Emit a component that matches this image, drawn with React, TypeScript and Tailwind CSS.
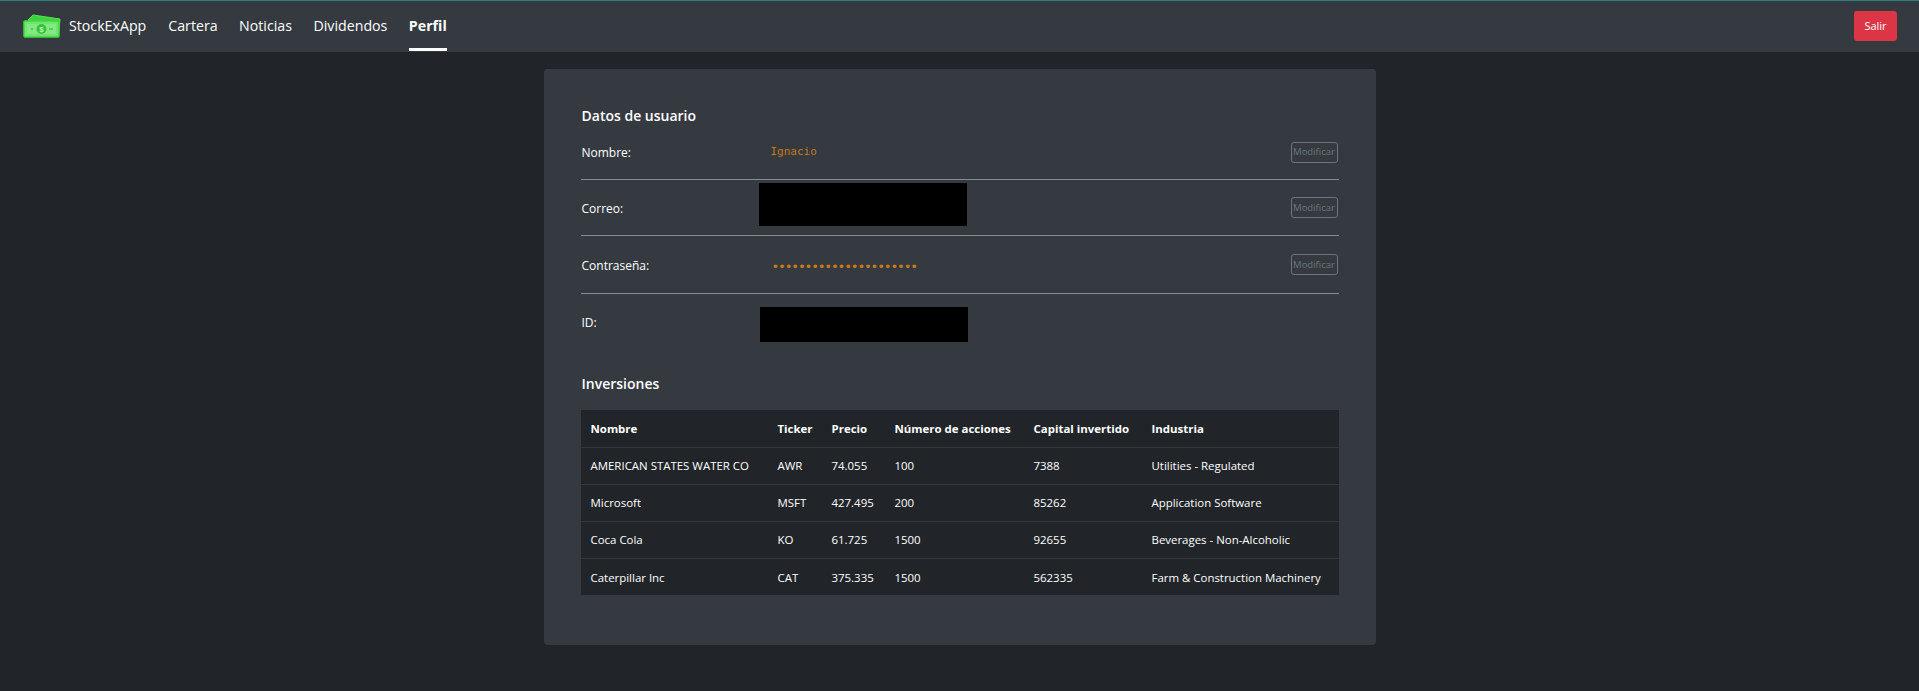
const FONT = "font-['Open_Sans','Noto_Sans',sans-serif]";

const NAV_LINKS = ['Cartera', 'Noticias', 'Dividendos'];

const INVESTMENTS = [
  ['AMERICAN STATES WATER CO', 'AWR', '74.055', '100', '7388', 'Utilities - Regulated'],
  ['Microsoft', 'MSFT', '427.495', '200', '85262', 'Application Software'],
  ['Coca Cola', 'KO', '61.725', '1500', '92655', 'Beverages - Non-Alcoholic'],
  ['Caterpillar Inc', 'CAT', '375.335', '1500', '562335', 'Farm & Construction Machinery'],
];

const HEADERS = ['Nombre', 'Ticker', 'Precio', 'Número de acciones', 'Capital invertido', 'Industria'];
const COLS = ['w-[187px]', 'w-[54px]', 'w-[63px]', 'w-[139px]', 'w-[118px]', 'w-[197px]'];

function MoneyLogo() {
  return (
    <svg width="38" height="24" viewBox="0 0 38 24" className="shrink-0">
      <path d="M5 6 L10 1 L37 5 L36 18 L30 17 Z" fill="#3ed33e" stroke="#55e655" strokeWidth="1" />
      <rect x="1" y="7" width="35" height="16" rx="1" fill="#6fe56f" stroke="#3fd93f" strokeWidth="1.5" />
      <rect x="4" y="10" width="29" height="10" fill="#85e885" />
      <circle cx="18.5" cy="15" r="5" fill="#35c435" />
      <text x="18.5" y="18" textAnchor="middle" fontSize="8" fontWeight="700" fill="#bdf5bd" fontFamily="Liberation Sans">$</text>
      <circle cx="9" cy="15" r="1.3" fill="#4cd64c" />
      <rect x="26" y="14" width="4" height="2" fill="#4cd64c" />
    </svg>
  );
}

function ModifyButton() {
  return (
    <button
      type="button"
      className="mr-px h-[21px] w-[47px] rounded-[3px] border border-[#6c757d] text-[9.5px] leading-none text-[#6c757d]"
    >
      Modificar
    </button>
  );
}

function UserRow({ label, height, last, children, button = true }: { label: string; height: string; last?: boolean; children: React.ReactNode; button?: boolean }) {
  return (
    <div className={`flex items-center ${height} ${last ? '' : 'border-b border-[#8a8d90]'}`}>
      <div className="w-[178px] shrink-0 pl-px pt-[2px] text-[12px] text-white">{label}</div>
      <div className="flex h-full flex-1">{children}</div>
      {button && <ModifyButton />}
    </div>
  );
}

export default function App() {
  return (
    <div className={`min-h-screen bg-[#212529] ${FONT}`}>
      <header className="h-[52px] border-t border-[#2a7f7f] bg-[#343a40]">
        <nav className="flex h-[50px] items-center pl-[23px] pr-[22px] text-[14.2px] text-white">
          <MoneyLogo />
          <span className="ml-[8px]">StockExApp</span>
          <div className="ml-[22px] flex h-full items-center gap-[21.5px]">
            {NAV_LINKS.map((link) => (
              <a key={link} className="cursor-pointer">{link}</a>
            ))}
            <a className="flex h-full items-center border-b-[3px] border-white pt-[3px] font-bold">Perfil</a>
          </div>
          <button type="button" className="ml-auto h-[30px] w-[43px] rounded-[3px] bg-[#dc3545] text-[11px] text-white">
            Salir
          </button>
        </nav>
      </header>

      <main className="flex justify-center pt-[17px]">
        <section className="w-[832px] rounded-[4px] bg-[#343a40] px-[37px] pb-[50px] pt-[36px]">
          <h2 className="h-[20px] pl-px pt-px text-[14px] font-semibold leading-[20px] text-white">Datos de usuario</h2>

          <UserRow label="Nombre:" height="h-[55px]">
            <span className="ml-[12px] self-center pt-px font-['DejaVu_Sans_Mono',monospace] text-[11px] text-[#c9771b]">Ignacio</span>
          </UserRow>
          <UserRow label="Correo:" height="h-[56px]">
            <div className="mt-[3px] h-[43px] w-[208px] bg-black" />
          </UserRow>
          <UserRow label="Contraseña:" height="h-[58px]">
            <span className="ml-[13px] self-center pt-[3px] font-['DejaVu_Sans_Mono',monospace] text-[13px] leading-none tracking-[-1.22px] text-[#c9771b]">••••••••••••••••••••••</span>
          </UserRow>
          <UserRow label="ID:" height="h-[56px]" last button={false}>
            <div className="ml-px mt-[13px] h-[35px] w-[208px] bg-black" />
          </UserRow>

          <h2 className="mb-[15px] mt-[21px] h-[24px] pl-px pt-px text-[14px] font-semibold leading-[24px] text-white">Inversiones</h2>

          <table className="w-[758px] table-fixed bg-[#212529] text-[11.45px] text-white">
            <colgroup>
              {COLS.map((col) => (
                <col key={col} className={col} />
              ))}
            </colgroup>
            <thead>
              <tr className="h-[37px] border-b border-[#32383e]">
                {HEADERS.map((h) => (
                  <th key={h} className="pl-[10px] pt-px text-left font-bold">{h}</th>
                ))}
              </tr>
            </thead>
            <tbody>
              {INVESTMENTS.map((row, i) => (
                <tr key={row[0]} className={`h-[37px] ${i < 3 ? 'border-b border-[#32383e]' : ''}`}>
                  {row.map((cell) => (
                    <td key={cell} className="whitespace-nowrap pl-[10px] pt-px">{cell}</td>
                  ))}
                </tr>
              ))}
            </tbody>
          </table>
        </section>
      </main>
    </div>
  );
}
